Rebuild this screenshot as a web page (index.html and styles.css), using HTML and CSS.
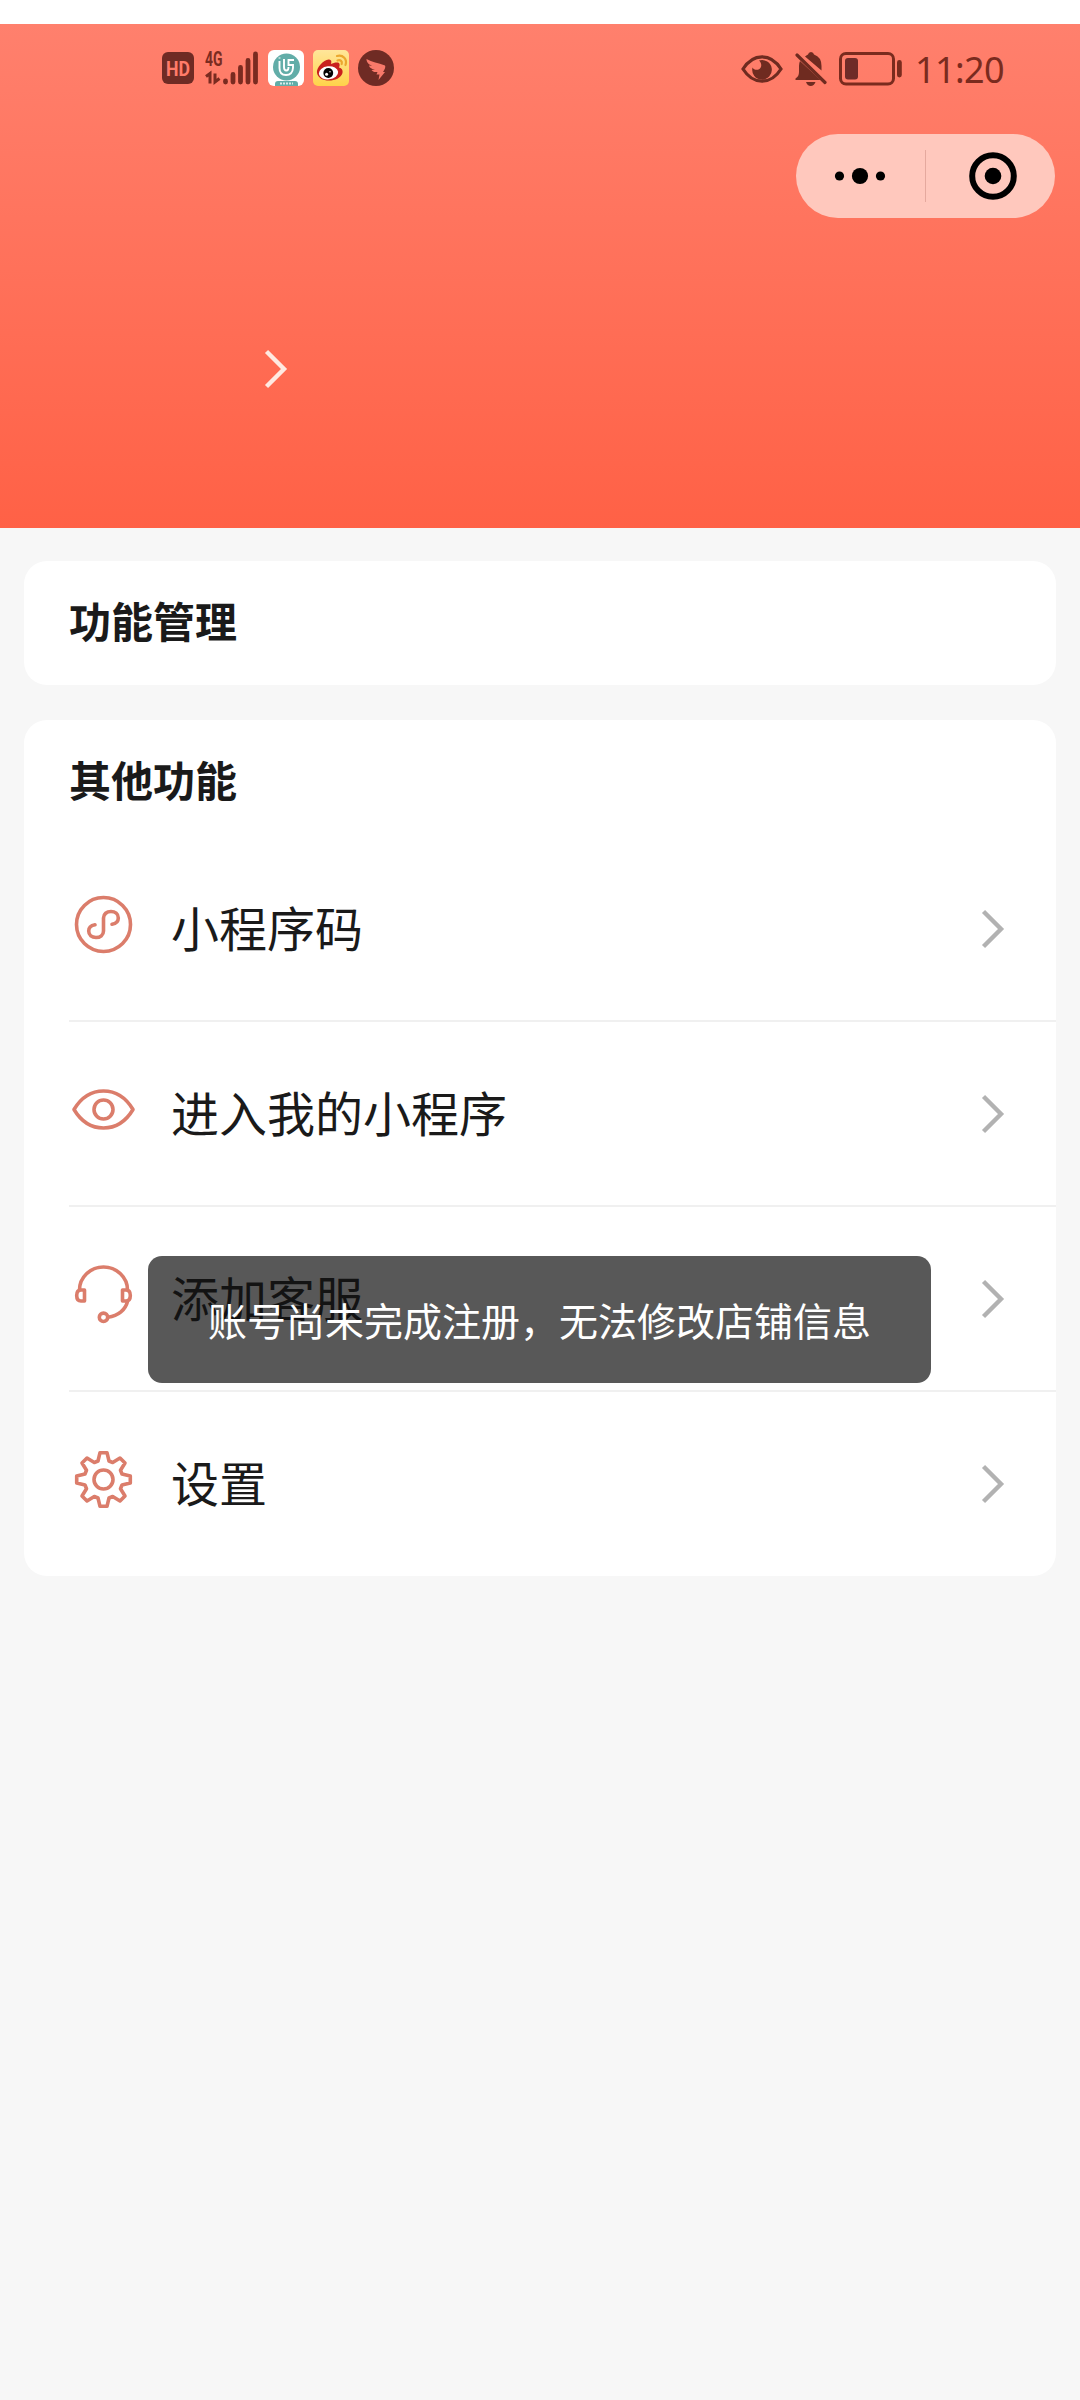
FILE: index.html
```html
<!DOCTYPE html>
<html lang="zh-CN">
<head>
    <meta charset="UTF-8">
    <meta name="viewport" content="width=device-width, initial-scale=1.0">
    <title>我的</title>
    <link rel="stylesheet" href="styles.css">
</head>
<body>
    <header class="header">
        <div class="status-bar">
            <div class="status-left">
                <svg class="status-icon" width="32" height="32" viewBox="0 0 32 32">
                    <rect width="32" height="32" rx="6" fill="#6f2b24"/>
                    <text class="hd-text" x="4" y="23.500" textLength="24" lengthAdjust="spacingAndGlyphs">HD</text>
                </svg>
                <svg class="status-icon" width="54" height="44" viewBox="0 -4 54 44">
                    <text class="net-text" x="0" y="15.500" textLength="17.500" lengthAdjust="spacingAndGlyphs">4G</text>
                    <path d="M1 26.500 5 23.500V33.500M10 23.500V32L14.500 28.500" fill="none" stroke="#7a2b20" stroke-width="3"/>
                    <path d="M20.500 31V32M28 24.500V32M35.500 17.500V32M43 10.500V32M50.500 4V32" fill="none" stroke="#7a2b20" stroke-width="4.800" stroke-linecap="round"/>
                </svg>
                <svg class="status-icon" width="36" height="36" viewBox="0 0 36 36">
                    <rect width="36" height="36" rx="6" fill="#fff"/>
                    <circle cx="18.500" cy="17" r="13.500" fill="#62ada8"/>
                    <path d="M7 36V34Q7 31 10 31H27Q30 31 30 34V36Z" fill="#62ada8"/>
                    <path d="M12 33.500H25" stroke="#d6ebe9" stroke-width="2" stroke-dasharray="2 1"/>
                    <path d="M11.500 11V18Q11.500 25 18 25T25 18V15H20.500V10H26M11.500 7.500V8.500M16 9V17Q16 20.500 18.300 20.500T20.500 17" fill="none" stroke="#fff" stroke-width="1.900"/>
                </svg>
                <svg class="status-icon" width="36" height="36" viewBox="0 0 36 36">
                    <defs>
                        <linearGradient id="weibo" x1="0" y1="0" x2="0" y2="1">
                            <stop offset="0" stop-color="#ffe69a"/>
                            <stop offset="1" stop-color="#ffd34a"/>
                        </linearGradient>
                    </defs>
                    <rect width="36" height="36" rx="5" fill="url(#weibo)"/>
                    <path d="M4 23C3 18 11 9 16 9.500C19 10 18.500 12 18 14C21 12.500 26 11.500 26.500 14C27 16 26 17 26 17.500C29 18.500 30 20 29.500 23C28 28 22 30.500 16 30.500S5 28 4 23Z" fill="#c9201d"/>
                    <ellipse cx="15.500" cy="22.800" rx="9.700" ry="6.600" fill="#fff" transform="rotate(-6 15.500 22.800)"/>
                    <circle cx="15.300" cy="23" r="4.900" fill="#050505"/>
                    <circle cx="13.600" cy="24.300" r="1.500" fill="#fff"/>
                    <circle cx="17" cy="21.800" r=".7" fill="#fff"/>
                    <path d="M24 6C30 4.500 34.500 9 32.500 15M24.500 10.500C27.500 9.500 29.500 11.500 28.700 14" fill="none" stroke="#eba72e" stroke-width="2.200" stroke-linecap="round"/>
                </svg>
                <svg class="status-icon" width="36" height="36" viewBox="0 0 36 36">
                    <circle cx="18" cy="18" r="18" fill="#6f2b24"/>
                    <path d="M8.500 9C14 12 20 13 27 15.500C28 17 26.500 19.500 25 22H27L20.500 30L21.500 24.500H18.500L19.500 22C16 22.300 14.500 21.500 13.500 20L17 19.500C13 19 11.500 17.500 11 15.500L14 15.800C10 14 8.500 12 8.500 9Z" fill="#f8796a"/>
                </svg>
            </div>
            <div class="status-right">
                <svg class="status-icon" width="42" height="28" viewBox="0 0 42 28">
                    <path d="M2 14C7 6 13.500 1.800 21 1.800S35 6 40 14C35 22 28.500 26.200 21 26.200S7 22 2 14Z" fill="none" stroke="#6f2b20" stroke-width="3.200"/>
                    <path d="M18 5.500C21 8 21 12.500 18 14.300C15.500 15.500 12.500 14.500 11.500 12.500A9.800 9.800 0 1 0 18 5.500Z" fill="#6f2b20"/>
                </svg>
                <svg class="status-icon" width="32" height="34" viewBox="0 0 32 34">
                    <path d="M10 4.500Q12 3 13 2.500Q13.500 0 16 0T19 2.500Q26.500 5 26.500 14V18.500ZM5 9 25.500 28H0.500V26.500Q4 24.500 4 20V14Q4 11 5 9ZM11 30H20.500Q19 34 15.700 34T11 30Z" fill="#6f2b20"/>
                    <path d="M2 3 30 30.500" stroke="#6f2b20" stroke-width="3.200" stroke-linecap="round"/>
                </svg>
                <svg class="status-icon" width="64" height="34" viewBox="0 0 64 34">
                    <rect x="1.500" y="1.500" width="53" height="30.500" rx="5.500" fill="none" stroke="#7a2b1e" stroke-width="3"/>
                    <rect x="6" y="6" width="13" height="21.500" rx="3" fill="#6f2b28"/>
                    <rect x="58" y="8" width="4.800" height="17.500" rx="2.400" fill="#7a2b1e"/>
                </svg>
                <span class="time">11:20</span>
            </div>
        </div>

        <div class="capsule">
            <svg class="capsule-menu" width="52" height="52" viewBox="0 0 52 52">
                <circle cx="5.500" cy="26" r="4.600"/>
                <circle cx="26" cy="26" r="8.100"/>
                <circle cx="46.500" cy="26" r="4.600"/>
            </svg>
            <span class="capsule-line"></span>
            <svg class="capsule-close" width="52" height="52" viewBox="0 0 52 52">
                <circle cx="26" cy="26" r="20.800" fill="none" stroke="#000" stroke-width="6"/>
                <circle cx="26" cy="26" r="8.300"/>
            </svg>
        </div>

        <div class="profile">
            <svg width="24" height="40" viewBox="0 0 24 40">
                <path d="M2.500 2.500 20 20 2.500 37.500" fill="none" stroke="#ffe9e1" stroke-width="4.400"/>
            </svg>
        </div>
    </header>

    <main class="content">
        <section class="card">
            <h2 class="card-title">功能管理</h2>
        </section>

        <section class="card">
            <h2 class="card-title">其他功能</h2>
            <ul class="menu">
                <li class="menu-item">
                    <svg class="menu-icon" viewBox="-34.5 -34.5 69 69">
                        <circle r="27"/>
                        <path d="M8.500-.3C13-1 14.800-3.800 14.800-6.600C14.800-10.600 11.500-13 7.500-13C3.300-13 0-10.500 0-6.500V6.500C0 10.500-3.300 13-7.500 13C-11.500 13-14.800 10.600-14.800 6.600C-14.800 3.800-13 1-8.500.3"/>
                    </svg>
                    <span class="menu-text">小程序码</span>
                    <svg class="arrow" viewBox="0 0 24 40"><path d="M2.500 2.500 20 20 2.500 37.500"/></svg>
                </li>
                <li class="menu-item">
                    <svg class="menu-icon" viewBox="-34.5 -34.5 69 69">
                        <path d="M-29.500 0C-22-12.500-12-18.500 0-18.500S22-12.500 29.500 0C22 12.500 12 18.500 0 18.500S-22 12.500-29.500 0Z"/>
                        <circle r="9.500"/>
                    </svg>
                    <span class="menu-text">进入我的小程序</span>
                    <svg class="arrow" viewBox="0 0 24 40"><path d="M2.500 2.500 20 20 2.500 37.500"/></svg>
                </li>
                <li class="menu-item">
                    <svg class="menu-icon" viewBox="-34.5 -34.5 69 69">
                        <path d="M-24-4.500A24 23 0 0 1 24-4.500"/>
                        <path d="M-19-4.500H-22.500Q-26.800-4.500-26.800 1T-22.500 6.500H-19Z"/>
                        <path d="M19-4.500H22.500Q26.800-4.500 26.800 1T22.500 6.500H19Z"/>
                        <path d="M24 7C22 15 15 21.500 4.500 22.800"/>
                        <circle cy="22.800" r="4.200"/>
                    </svg>
                    <span class="menu-text">添加客服</span>
                    <svg class="arrow" viewBox="0 0 24 40"><path d="M2.500 2.500 20 20 2.500 37.500"/></svg>
                </li>
                <li class="menu-item">
                    <svg class="menu-icon" viewBox="-34.5 -34.5 69 69">
                        <path d="M-5.500-18.500-3.500-26.800H3.500L5.500-18.500 9.200-17 16.500-21.500 21.500-16.500 17-9.200 18.500-5.500 26.800-3.500V3.500L18.500 5.500 17 9.200 21.500 16.500 16.500 21.500 9.200 17 5.500 18.500 3.500 26.800H-3.500L-5.500 18.500-9.200 17-16.500 21.500-21.500 16.500-17 9.200-18.500 5.500-26.800 3.500V-3.500L-18.500-5.500-17-9.200-21.500-16.500-16.500-21.500-9.200-17Z"/>
                        <circle r="9.500"/>
                    </svg>
                    <span class="menu-text">设置</span>
                    <svg class="arrow" viewBox="0 0 24 40"><path d="M2.500 2.500 20 20 2.500 37.500"/></svg>
                </li>
            </ul>
        </section>
    </main>

    <div class="toast">账号尚未完成注册，无法修改店铺信息</div>
</body>
</html>
```

FILE: styles.css
```css
* {
    box-sizing: border-box;
}
body {
    margin: 0;
    padding-top: 24px;
    min-height: 2400px;
    font-family: "Noto Sans CJK SC", sans-serif;
    color: #1a1a1a;
    background: linear-gradient(#fff 24px, #f7f7f7 24px);
}
svg {
    display: block;
    flex-shrink: 0;
}

/* 顶部 */
.header {
    display: flex;
    flex-direction: column;
    height: 504px;
    background: linear-gradient(#ff806d, #ff6146);
}
.status-bar {
    display: flex;
    justify-content: space-between;
    align-items: center;
    height: 88px;
    padding: 0 74px 0 162px;
}
.status-left {
    display: flex;
    align-items: center;
    gap: 9px;
}
.status-left .status-icon:nth-child(2) {
    margin-left: 2px;
}
.status-right {
    display: flex;
    align-items: center;
    gap: 12px;
    padding-top: 1px;
}
.hd-text {
    font: bold 20px Roboto, sans-serif;
    fill: #ff7b69;
}
.net-text {
    font: bold 20px Roboto, sans-serif;
    fill: #7a2b20;
}
.time {
    width: 91px;
    padding-top: 2px;
    font: 36px/40px "Noto Sans", sans-serif;
    letter-spacing: -0.6px;
    color: #7a2b1e;
    white-space: nowrap;
}

/* 右上角胶囊按钮 */
.capsule {
    display: flex;
    align-items: center;
    align-self: flex-end;
    width: 259px;
    height: 84px;
    margin: 22px 25px 0 0;
    padding: 0 36px 0 38px;
    border-radius: 42px;
    background-color: #ffc8bd;
}
.capsule-line {
    width: 1px;
    height: 52px;
    margin: 0 41px 0 39px;
    background-color: #e5a99e;
}
.profile {
    margin-top: 131px;
    padding-left: 264px;
}

/* 卡片 */
.content {
    display: flex;
    flex-direction: column;
    gap: 35px;
    padding: 33px 24px 0;
}
.card {
    border-radius: 23px;
    background-color: #fff;
}
.card-title {
    margin: 0;
    padding: 0 0 6px 45px;
    font-size: 42px;
    font-weight: bold;
    line-height: 118px;
}
.menu {
    margin: -7px 0 0;
    padding: 0 0 0 45px;
    list-style: none;
}
.menu-item {
    display: flex;
    align-items: center;
    height: 185px;
    padding-right: 51px;
    border-bottom: 2px solid #f0f0f0;
}
.menu-item:last-child {
    height: 184px;
    padding-bottom: 1px;
    border-bottom: none;
}
.menu-icon {
    width: 69px;
    height: 69px;
    margin: 0 33px 8px 0;
    fill: none;
    stroke: #db7d6b;
    stroke-width: 3.6;
    stroke-linejoin: round;
    stroke-linecap: round;
}
.menu-text {
    flex: 1;
    padding-bottom: 6px;
    font-size: 48px;
    line-height: 70px;
}
.arrow {
    width: 24px;
    height: 40px;
    fill: none;
    stroke: #b2b2b2;
    stroke-width: 4.4;
}

/* 提示 */
.toast {
    position: absolute;
    top: 1256px;
    left: 148px;
    width: 783px;
    height: 127px;
    border-radius: 14px;
    font-size: 39px;
    line-height: 127px;
    text-align: center;
    white-space: nowrap;
    color: #fff;
    background-color: rgba(17, 17, 17, 0.7);
}
```
